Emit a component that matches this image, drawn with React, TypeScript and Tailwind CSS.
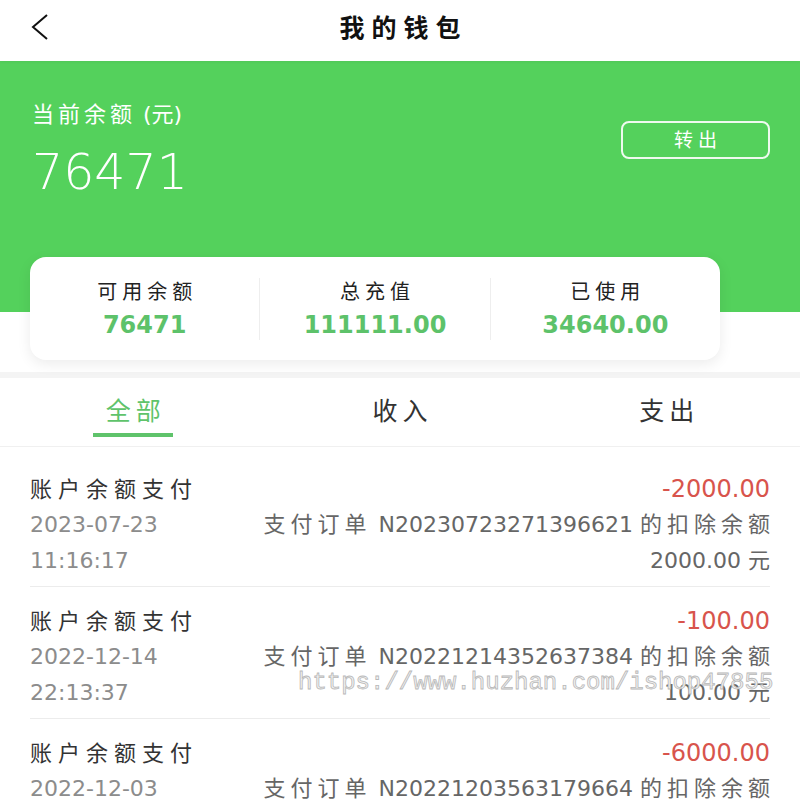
import React from "react";

const rows = [
  { amt: "-2000.00", date: "2023-07-23", time: "11:16:17", no: "N20230723271396621", val: "2000.00" },
  { amt: "-100.00", date: "2022-12-14", time: "22:13:37", no: "N20221214352637384", val: "100.00" },
  { amt: "-6000.00", date: "2022-12-03", time: "09:42:18", no: "N20221203563179664", val: "6000.00" },
];

function Row({ r }: { r: (typeof rows)[number] }) {
  return (
    <div className="mx-[30px] border-b border-[#ececec] pt-[16px] pb-[8px]">
      <div className="flex h-[36px] items-center justify-between">
        <span className="text-[22px] tracking-[6px] text-[#333]">账户余额支付</span>
        <span className="text-[24px] text-[#d8544c]">{r.amt}</span>
      </div>
      <div className="flex h-[35px] items-center justify-between whitespace-nowrap text-[22px]">
        <span className="text-[#8c8c8c]">{r.date}</span>
        <span className="text-[#666]">
          <span className="tracking-[5px]">支付订单</span> {r.no} <span className="tracking-[5px] mr-[-5px]">的扣除余额</span>
        </span>
      </div>
      <div className="flex h-[36px] items-center justify-between whitespace-nowrap text-[22px]">
        <span className="text-[#8c8c8c]">{r.time}</span>
        <span className="text-[#666]">{r.val} 元</span>
      </div>
    </div>
  );
}

export default function App() {
  return (
    <div className="relative w-[800px] min-h-[800px] overflow-hidden bg-white font-['DejaVu_Sans','Noto_Sans_CJK_SC',sans-serif]">
      {/* header */}
      <div className="relative z-10 grid h-[61px] grid-cols-[1fr_auto_1fr] items-center bg-white shadow-[0_1px_3px_rgba(0,0,0,0.05)]">
        <div className="pl-[30px] pb-[8px]">
          <svg width="20" height="26" viewBox="0 0 20 26" fill="none">
            <polyline points="17,1 3,13 17,25" stroke="#111" strokeWidth="2" strokeLinejoin="miter" />
          </svg>
        </div>
        <div className="pb-[4px] text-[25px] font-bold tracking-[7px] text-[#111] mr-[-7px]">我的钱包</div>
        <div />
      </div>

      {/* green band */}
      <div className="flex h-[251px] items-start justify-between bg-[#54d15c] pl-[32px] pr-[30px] pt-[39px]">
        <div className="flex flex-col">
          <div className="h-[30px] text-[22px] leading-[30px] text-white">
            <span className="tracking-[4px]">当前余额</span> (元)
          </div>
          <div className="mt-[15px] h-[56px] text-[49px] font-extralight leading-[56px] text-white">76471</div>
        </div>
        <div className="mt-[21px] flex h-[38px] w-[149px] items-center justify-center rounded-[8px] border-2 border-white/90 text-[19px] text-white">
          <span className="tracking-[5px] mr-[-5px]">转出</span>
        </div>
      </div>

      {/* summary card */}
      <div className="relative -mt-[55px] ml-[30px] flex h-[103px] w-[690px] items-center rounded-[16px] bg-white shadow-[0_4px_14px_rgba(0,0,0,0.08)]">
        {[
          ["可用余额", "76471"],
          ["总充值", "111111.00"],
          ["已使用", "34640.00"],
        ].map(([l, v], i) => (
          <React.Fragment key={l}>
            {i > 0 && <div className="h-[62px] w-px bg-[#eeeeee]" />}
            <div className="flex flex-1 flex-col items-center pt-[1px]">
              <div className="h-[28px] text-[20px] leading-[28px] tracking-[5px] mr-[-5px] text-[#222]">{l}</div>
              <div className="mt-[4px] h-[30px] text-[24px] font-bold leading-[30px] text-[#5dc26a]">{v}</div>
            </div>
          </React.Fragment>
        ))}
      </div>

      <div className="mt-[12px] h-[6px] bg-[#f4f4f4]" />

      {/* tabs */}
      <div className="flex h-[69px] border-b border-[#f0f0f0]">
        {["全部", "收入", "支出"].map((t, i) => (
          <div key={t} className="flex flex-1 flex-col items-center pt-[19px]">
            <div
              className={
                i === 0
                  ? "h-[30px] text-[25px] leading-[30px] tracking-[5px] mr-[-5px] text-[#5fc36b]"
                  : "h-[30px] text-[25px] leading-[30px] tracking-[5px] mr-[-5px] text-[#333]"
              }
            >
              {t}
            </div>
            <div className={i === 0 ? "mt-[6px] h-[4px] w-[80px] bg-[#5fc36b]" : "mt-[6px] h-[4px] w-[80px]"} />
          </div>
        ))}
      </div>

      {/* list */}
      <div className="pt-[8px]">
        {rows.map((r) => (
          <Row key={r.no} r={r} />
        ))}
      </div>

      {/* watermark */}
      <div className="pointer-events-none absolute left-[298px] top-[668px] font-['Liberation_Mono',monospace] text-[24px] leading-[30px] text-[#f2f2f2] [-webkit-text-stroke:0.8px_#b8b8b8]">
        https://www.huzhan.com/ishop47855
      </div>
    </div>
  );
}
